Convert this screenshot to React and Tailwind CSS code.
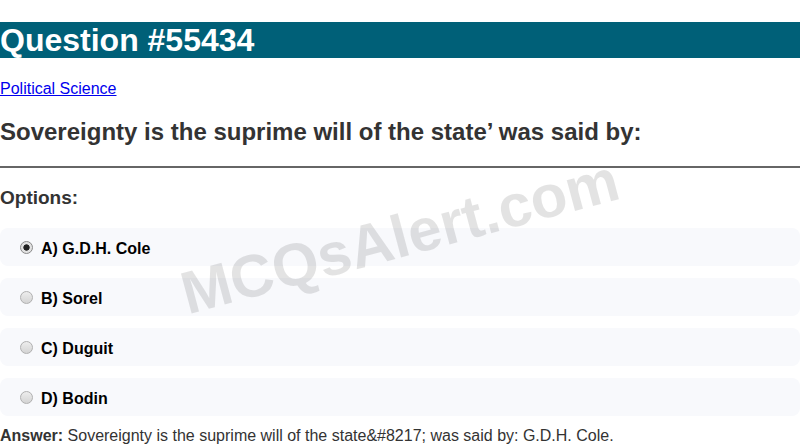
import React from "react";

const options = [
  { key: "A", text: "G.D.H. Cole", checked: true },
  { key: "B", text: "Sorel" },
  { key: "C", text: "Duguit" },
  { key: "D", text: "Bodin" },
];

export default function App() {
  return (
    <div className="relative min-h-[446px] overflow-hidden bg-white font-['Liberation_Sans',Arial,sans-serif] text-[#333]">
      {/* Header */}
      <h1 className="mt-[22px] h-[36px] bg-[#006078] text-[32px] font-bold leading-[36px] text-white">
        Question #55434
      </h1>

      <a href="#" className="mt-[22px] block text-[16px] leading-[18px] text-[#0000ee] underline">
        Political Science
      </a>

      <h2 className="mt-[20px] text-[24px] font-bold leading-[28px]">
        Sovereignty is the suprime will of the state’ was said by:
      </h2>

      <hr className="mt-[20px] border-0 border-t-2 border-[#666]" />

      <h3 className="mt-[19px] text-[19px] font-bold leading-[21px]">Options:</h3>

      {/* Options */}
      <div className="mt-[20px] flex flex-col gap-[12px]">
        {options.map((o) => (
          <label
            key={o.key}
            className="flex h-[38px] items-center rounded-lg bg-[#f8f9fc] pl-[20px] text-[16px] font-bold text-black"
          >
            <input
              type="radio"
              name="opt"
              defaultChecked={o.checked}
              className="m-0 h-[13px] w-[13px] shrink-0 appearance-none rounded-full border border-[#b0b0b0] bg-[linear-gradient(#ededed,#d4d4d4)] checked:border-[#8a8a8a] checked:bg-[radial-gradient(circle,#222_0_2.8px,#e2e2e2_3.5px)]"
            />
            <span className="ml-[8px] mt-[3px]">
              {o.key}) {o.text}
            </span>
          </label>
        ))}
      </div>

      <p className="mt-[11px] text-[16px] leading-[18px]">
        <span className="font-bold">Answer:</span> Sovereignty is the suprime will of the state&amp;#8217; was said by: G.D.H. Cole.
      </p>

      {/* Watermark */}
      <div className="pointer-events-none absolute left-[400px] top-[237px] -translate-x-1/2 -translate-y-1/2 -rotate-[15deg] whitespace-nowrap text-[60px] font-bold text-black/[0.11]">
        MCQsAlert.com
      </div>
    </div>
  );
}
